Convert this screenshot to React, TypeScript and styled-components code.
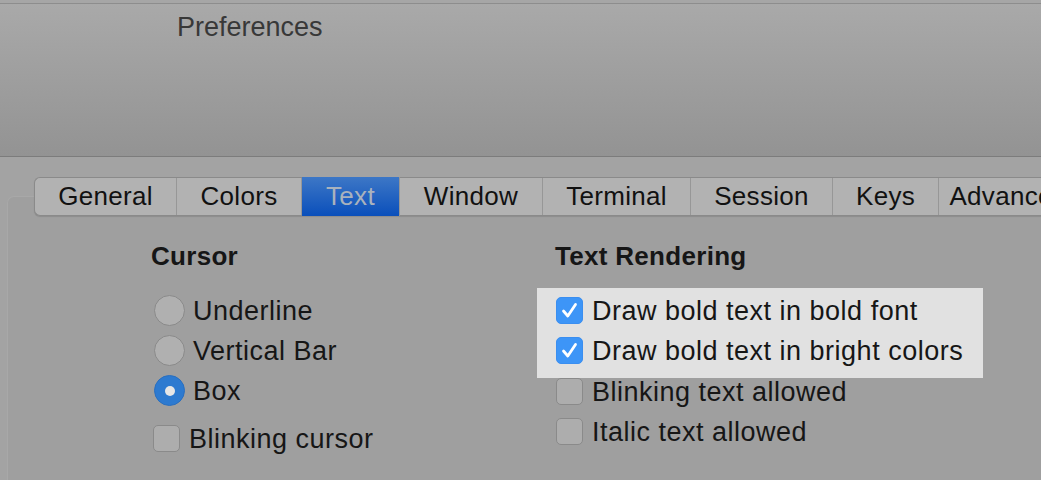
import React from 'react';
import styled, { createGlobalStyle } from 'styled-components';

const GlobalStyle = createGlobalStyle`
    html, body {
        margin: 0;
        padding: 0;
        background: #a3a3a3;
    }
    body {
        font-family: "Liberation Sans", Arial, sans-serif;
        color: #161616;
    }
`;

const Window = styled.div`
    width: 1041px;
    height: 480px;
    overflow: hidden;
    background: #a3a3a3;
`;

const TitleBar = styled.div`
    height: 152px;
    margin-top: 3px;
    border-top: 1px solid #8d8d8d;
    border-bottom: 1px solid #7c7c7c;
    background: linear-gradient(to bottom, #a9a9a9, #939393);
    box-shadow: 0 -3px 0 #a6a6a6;
`;

const Title = styled.div`
    padding: 8px 0 0 177px;
    font-size: 27px;
    line-height: 30px;
    color: #383838;
`;

const Body = styled.div`
    padding-top: 20px;
`;

const TabBar = styled.div`
    position: relative;
    z-index: 1;
    display: flex;
    margin-left: 34px;
    height: 37px;
    border: 1px solid #8a8a8a;
    border-right: none;
    border-radius: 6px 0 0 6px;
    background: #b2b2b2;
    box-shadow: 0 1px 1px rgba(0, 0, 0, 0.12);
    white-space: nowrap;
`;

const Tab = styled.div<{ $w: number; $active?: boolean }>`
    flex: 0 0 ${({ $w }) => $w}px;
    display: flex;
    align-items: center;
    justify-content: center;
    box-sizing: border-box;
    font-size: 26px;
    letter-spacing: 0.3px;
    border-right: 1px solid #979797;
    color: ${({ $active }) => ($active ? '#a9b2bd' : '#111')};
    background: ${({ $active }) =>
        $active ? 'linear-gradient(to bottom, #3d77c6, #0a4fbb)' : 'transparent'};
    margin: ${({ $active }) => ($active ? '-1px 0' : '0')};
    &:first-child {
        border-radius: 6px 0 0 6px;
    }
`;

const Panel = styled.div`
    margin: -20px 0 0 7px;
    height: 300px;
    padding-top: 44px;
    border: 1px solid #a8a8a8;
    border-right: none;
    border-bottom: none;
    border-radius: 7px 0 0 0;
    background: #9f9f9f;
    display: grid;
    grid-template-columns: 529px 1fr;
`;

const Column = styled.div<{ $pad: number }>`
    padding-left: ${({ $pad }) => $pad}px;
    display: flex;
    flex-direction: column;
`;

const Heading = styled.div<{ $indent?: number }>`
    font-weight: bold;
    font-size: 26px;
    letter-spacing: 0.3px;
    line-height: 30px;
    padding-left: ${({ $indent }) => $indent ?? 0}px;
`;

const List = styled.div<{ $top: number; $gap: number }>`
    display: flex;
    flex-direction: column;
    gap: ${({ $gap }) => $gap}px;
    margin-top: ${({ $top }) => $top}px;
`;

const Highlight = styled.div`
    width: 446px;
    box-sizing: border-box;
    margin-top: 17px;
    padding: 9px 0 14px 19px;
    background: #e1e1e1;
    display: flex;
    flex-direction: column;
    gap: 13px;
`;

const Row = styled.div<{ $h: number; $gap: number; $indent?: number }>`
    display: flex;
    align-items: center;
    height: ${({ $h }) => $h}px;
    gap: ${({ $gap }) => $gap}px;
    padding-left: ${({ $indent }) => $indent ?? 0}px;
`;

const Label = styled.span`
    font-size: 27px;
    letter-spacing: 0.5px;
    line-height: 30px;
    white-space: nowrap;
`;

const Radio = styled.span<{ $on?: boolean }>`
    flex: 0 0 auto;
    box-sizing: border-box;
    width: 31px;
    height: 31px;
    border-radius: 50%;
    display: flex;
    align-items: center;
    justify-content: center;
    background: ${({ $on }) => ($on ? '#2d7ad0' : '#b0b0b0')};
    border: 1px solid ${({ $on }) => ($on ? '#2a6fbf' : '#8a8a8a')};
    &::after {
        content: '';
        display: ${({ $on }) => ($on ? 'block' : 'none')};
        width: 10px;
        height: 10px;
        border-radius: 50%;
        background: #e6e6e6;
    }
`;

const Box = styled.span<{ $on?: boolean }>`
    flex: 0 0 auto;
    box-sizing: border-box;
    width: 27px;
    height: 27px;
    border-radius: 5px;
    display: flex;
    align-items: center;
    justify-content: center;
    background: ${({ $on }) => ($on ? '#3d95f7' : '#adadad')};
    border: 1px solid ${({ $on }) => ($on ? '#3a8ef0' : '#8a8a8a')};
`;

const Check = () => (
    <svg width="21" height="21" viewBox="0 0 21 21">
        <path d="M4.5 11 L8.8 16 L16.5 4.5" fill="none" stroke="#fff" strokeWidth="2.8" strokeLinecap="round" strokeLinejoin="round" />
    </svg>
);

const tabs = [
    { title: 'General', w: 142 },
    { title: 'Colors', w: 125 },
    { title: 'Text', w: 98, active: true },
    { title: 'Window', w: 143 },
    { title: 'Terminal', w: 148 },
    { title: 'Session', w: 142 },
    { title: 'Keys', w: 106 },
    { title: 'Advanced', w: 140 },
];

const App = () => {
    return (
        <Window>
            <GlobalStyle />
            <TitleBar>
                <Title>Preferences</Title>
            </TitleBar>
            <Body>
                <TabBar>
                    {tabs.map((t) => (
                        <Tab key={t.title} $w={t.w} $active={t.active}>
                            {t.title}
                        </Tab>
                    ))}
                </TabBar>
                <Panel>
                    <Column $pad={143}>
                        <Heading>Cursor</Heading>
                        <List $top={24} $gap={9}>
                            <Row $h={31} $gap={8} $indent={3}>
                                <Radio />
                                <Label>Underline</Label>
                            </Row>
                            <Row $h={31} $gap={8} $indent={3}>
                                <Radio />
                                <Label>Vertical Bar</Label>
                            </Row>
                            <Row $h={31} $gap={8} $indent={3}>
                                <Radio $on />
                                <Label>Box</Label>
                            </Row>
                        </List>
                        <List $top={19} $gap={0}>
                            <Row $h={27} $gap={9} $indent={2}>
                                <Box />
                                <Label>Blinking cursor</Label>
                            </Row>
                        </List>
                    </Column>
                    <Column $pad={0}>
                        <Heading $indent={18}>Text Rendering</Heading>
                        <Highlight>
                            <Row $h={27} $gap={9}>
                                <Box $on><Check /></Box>
                                <Label>Draw bold text in bold font</Label>
                            </Row>
                            <Row $h={27} $gap={9}>
                                <Box $on><Check /></Box>
                                <Label>Draw bold text in bright colors</Label>
                            </Row>
                        </Highlight>
                        <List $top={0} $gap={13}>
                            <Row $h={27} $gap={9} $indent={19}>
                                <Box />
                                <Label>Blinking text allowed</Label>
                            </Row>
                            <Row $h={27} $gap={9} $indent={19}>
                                <Box />
                                <Label>Italic text allowed</Label>
                            </Row>
                        </List>
                    </Column>
                </Panel>
            </Body>
        </Window>
    );
};

export default App;
